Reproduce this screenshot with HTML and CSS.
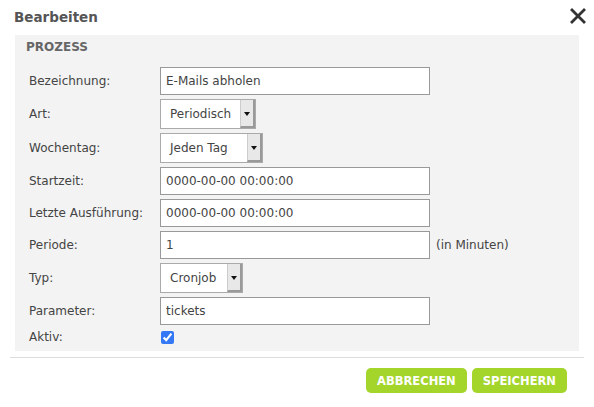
FILE: index.html
```html
<!DOCTYPE html>
<html lang="de">
<head>
<meta charset="utf-8">
<title>Bearbeiten</title>
<link rel="stylesheet" href="styles.css">
</head>
<body>
<div class="dialog">
  <div class="header">
    <span class="title">Bearbeiten</span>
    <svg class="close" width="16" height="16" viewBox="0 0 16 16"><path d="M2 2 L14 14 M14 2 L2 14" stroke="#333" stroke-width="2.8" stroke-linecap="square" fill="none"/></svg>
  </div>
  <div class="panel">
    <div class="legend">PROZESS</div>
    <div class="form">
      <label class="lbl">Bezeichnung:</label>
      <input class="txt" type="text" value="E-Mails abholen">
      <span></span>

      <label class="lbl">Art:</label>
      <div class="select w-art"><span class="sel-text">Periodisch</span><span class="sel-btn"><span class="tri"></span></span></div>
      <span></span>

      <label class="lbl">Wochentag:</label>
      <div class="select w-tag"><span class="sel-text">Jeden Tag</span><span class="sel-btn"><span class="tri"></span></span></div>
      <span></span>

      <label class="lbl">Startzeit:</label>
      <input class="txt" type="text" value="0000-00-00 00:00:00">
      <span></span>

      <label class="lbl">Letzte Ausführung:</label>
      <input class="txt" type="text" value="0000-00-00 00:00:00">
      <span></span>

      <label class="lbl">Periode:</label>
      <input class="txt" type="text" value="1">
      <span class="hint">(in Minuten)</span>

      <label class="lbl">Typ:</label>
      <div class="select w-typ"><span class="sel-text">Cronjob</span><span class="sel-btn"><span class="tri"></span></span></div>
      <span></span>

      <label class="lbl">Parameter:</label>
      <input class="txt" type="text" value="tickets">
      <span></span>

      <label class="lbl lbl-check">Aktiv:</label>
      <div class="check-cell"><input class="chk" type="checkbox" checked></div>
      <span></span>
    </div>
  </div>
  <div class="footer">
    <button class="btn">ABBRECHEN</button>
    <button class="btn">SPEICHERN</button>
  </div>
</div>
</body>
</html>
```

FILE: styles.css
```css
html, body {
  margin: 0;
  padding: 0;
  background: #fff;
}
body {
  font-family: "DejaVu Sans", Verdana, sans-serif;
  font-size: 12px;
  color: #444;
}
.dialog {
  width: 594px;
}
.header {
  height: 35px;
  display: flex;
  align-items: center;
  justify-content: space-between;
  padding: 0 8px 0 14px;
  box-sizing: border-box;
}
.title {
  font-weight: bold;
  font-size: 13.5px;
  color: #555;
  margin-top: -1px;
}
.close {
  display: block;
  margin-top: -3px;
}
.panel {
  margin: 0 15px;
  background: #f3f3f3;
  padding: 4px 14px 6px 11px;
}
.legend {
  font-weight: bold;
  font-size: 12px;
  line-height: 16px;
  color: #666;
}
.form {
  margin-top: 12px;
  margin-left: 3px;
  display: grid;
  grid-template-columns: 131px 270px auto;
  row-gap: 4px;
  align-items: center;
}
.lbl {
  color: #444;
}
.txt {
  box-sizing: border-box;
  width: 270px;
  height: 28px;
  margin: 0;
  border: 1px solid #999;
  padding: 0 5px;
  font-family: inherit;
  font-size: 12px;
  color: #444;
  background: #fff;
  outline: none;
}
.hint {
  margin-left: 6px;
  color: #444;
}
.select {
  box-sizing: border-box;
  height: 30px;
  border: 1px solid #aaa;
  background: #fff;
  display: flex;
  justify-self: start;
}
.w-art { width: 96px; }
.w-tag { width: 103px; }
.w-typ { width: 83px; }
.sel-text {
  flex: 1;
  padding-left: 9px;
  line-height: 28px;
  color: #444;
}
.sel-btn {
  width: 15px;
  box-sizing: border-box;
  background: #e8e8e8;
  border-left: 1px solid #ccc;
  border-right: 2px solid #999;
  border-bottom: 2px solid #999;
  display: flex;
  align-items: center;
  justify-content: center;
}
.tri {
  width: 0;
  height: 0;
  border-left: 3px solid transparent;
  border-right: 3px solid transparent;
  border-top: 4px solid #111;
  margin-top: 1px;
}
.check-cell {
  height: 16px;
  display: flex;
  align-items: center;
}
.lbl-check {
  line-height: 16px;
}
.chk {
  width: 13px;
  height: 13px;
  margin: 1px 0 0 1px;
  accent-color: #3478f6;
}
.footer {
  margin: 6px 10px 0;
  border-top: 1px solid #ddd;
  padding: 10px 17px 0 0;
  display: flex;
  justify-content: flex-end;
  gap: 5px;
}
.btn {
  height: 25px;
  border: none;
  border-radius: 5px;
  background: #a3d52a;
  color: #fff;
  font-family: "DejaVu Sans", Verdana, sans-serif;
  font-weight: bold;
  font-size: 11.5px;
  padding: 0 11px;
  margin: 0;
  cursor: pointer;
}
```
